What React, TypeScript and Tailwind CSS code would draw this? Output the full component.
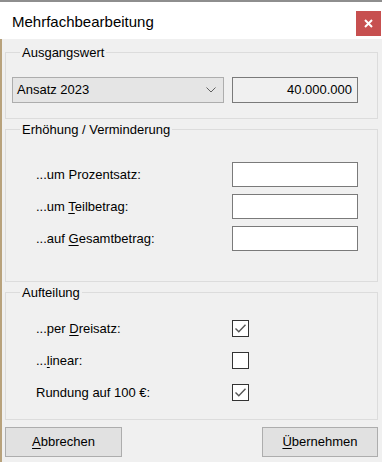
import React from 'react';

const font = { fontFamily: '"Liberation Sans", Arial, sans-serif' };

function Mn({ children }: { children: React.ReactNode }) {
  return <span className="underline decoration-1 underline-offset-[2px]">{children}</span>;
}

function Group({ title, className, children }: { title: string; className: string; children: React.ReactNode }) {
  return (
    <fieldset className={`ml-[3px] mr-[4px] border border-[#dcdcdc] pl-[6px] ${className}`}>
      <legend className="ml-[8px] px-[2px] text-[13px] leading-[15px] text-black">{title}</legend>
      {children}
    </fieldset>
  );
}

function Check({ checked }: { checked: boolean }) {
  return (
    <div className="flex h-[17px] w-[17px] items-center justify-center border border-[#333] bg-white">
      {checked && (
        <svg width="13" height="11" viewBox="0 0 13 11">
          <path d="M1.5 5.5 L4.8 8.8 L11.5 1.8" fill="none" stroke="#555" strokeWidth="1.4" />
        </svg>
      )}
    </div>
  );
}

function InputRow({ label }: { label: React.ReactNode }) {
  return (
    <div className="flex h-[25px] items-center">
      <div className="w-[220px] pl-[24px] text-[13px] text-black">{label}</div>
      <div className="h-[25px] w-[126px] border border-[#7a7a7a] bg-white" />
    </div>
  );
}

function CheckRow({ label, checked }: { label: React.ReactNode; checked: boolean }) {
  return (
    <div className="flex h-[17px] items-center">
      <div className="w-[220px] pl-[24px] text-[13px] text-black">{label}</div>
      <Check checked={checked} />
    </div>
  );
}

export default function App() {
  return (
    <div className="h-[462px] w-[382px] overflow-hidden bg-[#f0f0f0]" style={font}>
      <div className="flex h-[39px] items-start justify-between border-t-2 border-[#8e8e8e] bg-white">
        <span className="ml-[12px] mt-[11px] text-[15px] leading-[18px] text-black">Mehrfachbearbeitung</span>
        <div className="mr-[1px] mt-[9px] flex h-[25px] w-[25px] items-center justify-center bg-[#c75050]">
          <svg width="9" height="9" viewBox="0 0 9 9">
            <path d="M1 1 L8 8 M8 1 L1 8" stroke="#fff" strokeWidth="2" />
          </svg>
        </div>
      </div>

      <div className="flex h-[423px] flex-col border-l-2 border-[#b8a27c]">
        <Group title="Ausgangswert" className="mt-[6px] h-[74px] pt-[17px]">
          <div className="flex items-center gap-[8px]">
            <div className="flex h-[26px] w-[212px] items-center justify-between border border-[#adadad] bg-[#e5e5e5] pl-[4px] pr-[7px] text-[13px] text-black">
              <span>Ansatz 2023</span>
              <svg width="10" height="6" viewBox="0 0 10 6">
                <path d="M0.5 0.5 L5 5 L9.5 0.5" fill="none" stroke="#606060" strokeWidth="1" />
              </svg>
            </div>
            <div className="flex h-[26px] w-[126px] items-center justify-end border border-[#7a7a7a] bg-[#f0f0f0] pr-[5px] text-[13px] text-black">
              40.000.000
            </div>
          </div>
        </Group>

        <Group title="Erhöhung / Verminderung" className="mt-[3px] h-[160px] pt-[25px]">
          <div className="flex flex-col gap-[7px]">
            <InputRow label="...um Prozentsatz:" />
            <InputRow label={<>...um <Mn>T</Mn>eilbetrag:</>} />
            <InputRow label={<>...auf <Mn>G</Mn>esamtbetrag:</>} />
          </div>
        </Group>

        <Group title="Aufteilung" className="mt-[3px] h-[135px] pt-[20px]">
          <div className="flex flex-col gap-[15px]">
            <CheckRow label={<>...per <Mn>D</Mn>reisatz:</>} checked />
            <CheckRow label={<>...<Mn>l</Mn>inear:</>} checked={false} />
            <CheckRow label="Rundung auf 100 €:" checked />
          </div>
        </Group>

        <div className="mt-[7px] flex justify-between pl-[3px] pr-[4px]">
          <button className="h-[30px] w-[117px] border border-[#adadad] bg-[#e1e1e1] text-[13px] text-black">
            <Mn>A</Mn>bbrechen
          </button>
          <button className="h-[30px] w-[116px] border border-[#adadad] bg-[#e1e1e1] text-[13px] text-black">
            <Mn>Ü</Mn>bernehmen
          </button>
        </div>
      </div>
    </div>
  );
}
